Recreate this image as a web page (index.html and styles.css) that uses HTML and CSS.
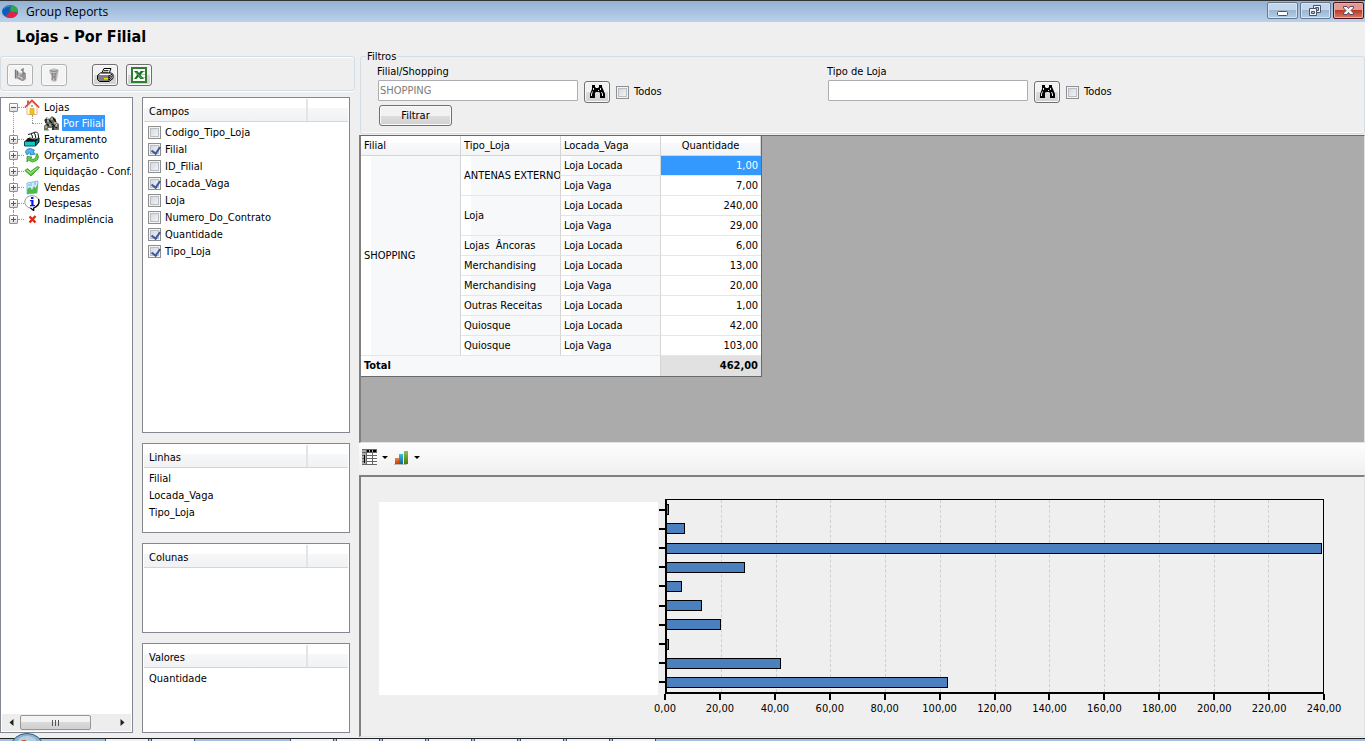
FILE: index.html
```html
<!DOCTYPE html>
<html lang="pt-BR">
<head>
<meta charset="utf-8">
<title>Group Reports</title>
<link rel="stylesheet" href="styles.css">
</head>
<body>
<header class="titlebar">
  <svg class="app-icon" width="16" height="16" viewBox="0 0 16 16"><ellipse cx="8" cy="7.500" rx="8" ry="6.500" fill="#0b5fb8"/><path d="M8 7.500 9 1A8 6 0 0 1 15.700 8.500Z" fill="#2fa84b"/><path d="M8 7.500 15.700 8.900Q14.500 13.500 9 14 6 14 3.500 12Z" fill="#e22244"/><path d="M2 4.500Q4 1.500 8 2" stroke="#5b9be0" fill="none"/></svg>
  <span class="app-name">Group Reports</span>
  <div class="window-buttons">
    <button class="win-btn" aria-label="Minimizar"><svg width="29" height="15" viewBox="0 0 29 15"><rect x="9.500" y="8.500" width="10" height="4" rx="1" fill="#fff" stroke="#4a5468"/></svg></button>
    <button class="win-btn" aria-label="Restaurar"><svg width="29" height="15" viewBox="0 0 29 15"><g fill="#f4f4f6" stroke="#4a5468"><path d="M12.500 2.500h7v7h-7z"/><path d="M14.500 4.500h3v3h-3z" fill="#a9c0d8"/><path d="M8.500 5.500h7v7h-7z"/><path d="M10.500 8.500h3v2h-3z" fill="#a9c0d8"/></g></svg></button>
    <button class="win-btn close" aria-label="Fechar"><svg width="29" height="15" viewBox="0 0 29 15"><path d="M9.500 3.500h3.500l1.500 2 1.500-2h3.500v1.500l-2.500 2.500 2.500 2.500v1.500h-3.500l-1.500-2-1.500 2h-3.500v-1.500l2.500-2.500-2.500-2.500z" fill="#f2f2f4" stroke="#5a4a5c"/></svg></button>
  </div>
</header>

<main class="workspace">
  <section class="side">
    <h1 class="page-title">Lojas - Por Filial</h1>
    <div class="toolbar">
      <button class="tool" disabled aria-label="Salvar"><svg width="16" height="16" viewBox="0 0 16 16"><path d="M3 3v8l8 3V6L7 5.500 5 3z" fill="#b9b9b9"/><path d="M3.500 2.500v9M5.500 4v4" stroke="#777" stroke-width="1.300"/><path d="M4 8.500h4L12.500 5v8.500L10 14l-5-3z" fill="#909090"/><path d="M9 3.500 11 2v4l2 .5v6" fill="none" stroke="#777" stroke-width="1.300"/><path d="M6 9.500l4 1v2" fill="none" stroke="#e2e2e2"/></svg></button>
      <button class="tool" disabled aria-label="Excluir"><svg width="16" height="16" viewBox="0 0 16 16"><path d="M3.500 3q1-1.500 4.500-1.500T12.500 3v2.500l-1 2 .5 1-1.500 5.500q-2.500 1.500-5 0L5 8.500 3.500 5.500z" fill="#bdbdbd"/><path d="M4 3.500q4 2 8 0M5 6.500l3 .5 3-1M6 7l1 2-1 4M10 7 8.500 9.500l1 4M6 10h4" stroke="#888" fill="none" stroke-width="1.200"/></svg></button>
      <button class="tool spaced" aria-label="Imprimir"><svg width="18" height="16" viewBox="0 0 18 16"><path d="M5.500 6.500 8 1.500h7l-2 5" fill="#fff" stroke="#000"/><path d="M8 3.500h4.500M7 5.200h5" stroke="#000" stroke-width=".8"/><path d="M1.500 8.500 4.500 6h11l1.500 1.500v4l-4 3h-9.500l-2-2z" fill="#fff" stroke="#000"/><path d="M2 9h11l3.500-2M2 11h11l3.500-2.500M2 13h11l3-2.500" stroke="#000" fill="none"/><path d="M13 8.500v5" stroke="#000"/><path d="M8 11.700h4" stroke="#f2e600" stroke-width="1.500"/></svg></button>
      <button class="tool" aria-label="Exportar para Excel"><svg width="16" height="16" viewBox="0 0 16 16"><path d="M1 1h14v14H1z" fill="#fff" stroke="#2c8030" stroke-width="2"/><path d="M9 4.500h5M9 7.500h5M9 10.500h5" stroke="#a6cda2"/><path d="M3 4h3.500l1.500 2 2-2h3L9.500 7.700 13 12H9.300L7.500 9.700 5.500 12H3l3-4z" fill="#176d20"/><path d="M4.500 5 11 11.500" stroke="#7fc07c"/></svg></button>
    </div>
    <div class="side-body">
      <nav class="tree-panel">
        <ul class="tree">
          <li class="branch open">
            <div class="node"><button class="expander" aria-label="Recolher Lojas"></button><svg class="node-icon" width="16" height="16" viewBox="0 0 16 16"><path d="M3 8v7.500h10V8L8 3z" fill="#fffaf0" stroke="#e3b98a"/><path d="M.8 8.500 8 1.300l7.200 7.200" fill="none" stroke="#d93a32" stroke-width="1.600"/><path d="M7 6h2v2H7z" fill="#8ab4ee"/><path d="M6 9.500h4v6H6z" fill="#f3c21c" stroke="#d59c10" stroke-width=".6"/><path d="M3 1.500h2v3l-2 2z" fill="#d45a4a"/></svg><a href="#lojas">Lojas</a></div>
            <ul class="subtree">
              <li class="node"><svg class="node-icon" width="16" height="16" viewBox="0 0 16 16"><path d="M1 5l3-3 2 2 3-3 4 3v3l3 2v6H9v-2H5v2H1v-4l2-2z" fill="#6b6e62"/><path d="M3 4v4M6 5l3 3M10 3l3 4M4 9l2 2M9 9l5 4M10 11v4" stroke="#111" stroke-width="1.300"/><path d="M4 6h2M8 4h2M11 8h2M6 10h2M2 12h2M12 11h2M4 3.500h1M13 9.500h1" stroke="#e6e6da"/><path d="M5 8h1M8 12h1" stroke="#5ca0b8"/><path d="M1 15h5" stroke="#5f8a50"/></svg><a class="selected" href="#por-filial">Por Filial</a></li>
            </ul>
          </li>
          <li class="branch"><div class="node"><button class="expander" aria-label="Expandir Faturamento"></button><svg class="node-icon" width="16" height="16" viewBox="0 0 16 16"><path d="M.5 10.500 4 7h11l-3 3.500z" fill="#111"/><path d="M4 3.500q3-1.500 4 .5l1 4.500M7 2.500q3-1.500 4 .5l1 5M9.500 1.500q4-1.500 4.500 1l.8 5" fill="#fff" stroke="#111"/><path d="M5 6.500l6 1.500 3-1" stroke="#999" fill="none"/><path d="M.5 10.500h11V15H.5z" fill="#19c4c8" stroke="#055"/><path d="M11.500 10.500 15 7v4l-3.500 4z" fill="#087478" stroke="#022"/></svg><a href="#faturamento">Faturamento</a></div></li>
          <li class="branch"><div class="node"><button class="expander" aria-label="Expandir Orçamento"></button><svg class="node-icon" width="16" height="16" viewBox="0 0 16 16"><path d="M1.500 4.500Q3 1 6.500 1.500L10.500 3 9 5l2.500 2L6 8l.5-2Q4 5 3.500 8 1.500 7 1.500 4.500z" fill="#55b4ec" stroke="#1b76bc" stroke-width=".8"/><path d="M13 6.500Q16 11 12.500 13.500l-4 1.500L4 13l-1 2V9.500l5 .5-1.500 1.500q4 2 5-1z" fill="#6bcf42" stroke="#2c9524" stroke-width=".8"/></svg><a href="#orcamento">Orçamento</a></div></li>
          <li class="branch"><div class="node"><button class="expander" aria-label="Expandir Liquidação"></button><svg class="node-icon" width="16" height="16" viewBox="0 0 16 16"><path d="M.8 7.500 3.500 5.500l3 3 7-5L15.500 4.500 7 13z" fill="#5cc23a" stroke="#2c9a26" stroke-width=".8"/><path d="M2.500 7l4 3L13.500 5" fill="none" stroke="#b5ee98"/></svg><a href="#liquidacao">Liquidação - Conf.</a></div></li>
          <li class="branch"><div class="node"><button class="expander" aria-label="Expandir Vendas"></button><svg class="node-icon" width="16" height="16" viewBox="0 0 16 16"><path d="M3 4l11-2-1 12-10 1z" fill="#d3ebfb" stroke="#8dbde0"/><path d="M3 15l.3-5L6 8l2 3 2-4 1.500 2L14 4l-1 10z" fill="#4dbb52"/><path d="M4 6h2M7 4v3M11 3v3" stroke="#6db3ea"/></svg><a href="#vendas">Vendas</a></div></li>
          <li class="branch"><div class="node"><button class="expander" aria-label="Expandir Despesas"></button><svg class="node-icon" width="16" height="16" viewBox="0 0 16 16"><path d="M8 .7a7 6.200 0 0 1 1.500 12.300V15.500L6.500 13A7 6.200 0 0 1 8 .7z" fill="#fff" stroke="#999"/><path d="M14.500 4q2 6-4.800 9v2.500L6.500 13" fill="none" stroke="#000" stroke-width="1.300"/><path d="M7 2h2.500v2H7zM6 5h3.500v5H11v1.200H6V10h1.300V6.200H6z" fill="#1010f0"/></svg><a href="#despesas">Despesas</a></div></li>
          <li class="branch"><div class="node"><button class="expander" aria-label="Expandir Inadimplência"></button><svg class="node-icon" width="16" height="16" viewBox="0 0 16 16"><path d="M5.500 5.500l6 6M11.500 5 5.500 11.500" stroke="#dd2a13" stroke-width="2.400"/></svg><a href="#inadimplencia">Inadimplência</a></div></li>
        </ul>
        <div class="scrollbar">
          <button class="scroll-arrow" aria-label="Rolar para a esquerda"><svg width="5" height="7" viewBox="0 0 5 7"><path d="M4.500 0v7L.5 3.500z" fill="#222"/></svg></button>
          <div class="scroll-thumb"><i></i><i></i><i></i></div>
          <button class="scroll-arrow last" aria-label="Rolar para a direita"><svg width="5" height="7" viewBox="0 0 5 7"><path d="M.5 0v7l4-3.500z" fill="#222"/></svg></button>
        </div>
      </nav>
      <div class="lists">
        <section class="list grow"><h2 class="list-head"><span>Campos</span></h2>
          <div class="list-body checks">
            <label class="field"><input class="check" type="checkbox">Codigo_Tipo_Loja</label>
            <label class="field"><input class="check" type="checkbox" checked>Filial</label>
            <label class="field"><input class="check" type="checkbox">ID_Filial</label>
            <label class="field"><input class="check" type="checkbox" checked>Locada_Vaga</label>
            <label class="field"><input class="check" type="checkbox">Loja</label>
            <label class="field"><input class="check" type="checkbox">Numero_Do_Contrato</label>
            <label class="field"><input class="check" type="checkbox" checked>Quantidade</label>
            <label class="field"><input class="check" type="checkbox" checked>Tipo_Loja</label>
          </div></section>
        <section class="list"><h2 class="list-head"><span>Linhas</span></h2>
          <ul class="list-body"><li class="field">Filial</li><li class="field">Locada_Vaga</li><li class="field">Tipo_Loja</li></ul></section>
        <section class="list"><h2 class="list-head"><span>Colunas</span></h2></section>
        <section class="list"><h2 class="list-head"><span>Valores</span></h2>
          <ul class="list-body"><li class="field">Quantidade</li></ul></section>
      </div>
    </div>
  </section>

  <section class="content">
    <fieldset class="filters">
      <legend>Filtros</legend>
      <div class="filter">
        <label for="filial">Filial/Shopping</label>
        <div class="filter-row">
          <input class="text" id="filial" type="text" value="SHOPPING" disabled>
          <button class="tool find" aria-label="Procurar filial"><svg width="18" height="14" viewBox="0 0 18 14"><path d="M4 0h3v2l1 1h2l1-1V0h3v2l1 2 2 5v4h-5V8l-1-1H8L7 8v5H2V9l2-5z" fill="#000"/><path d="M5.500 3v2M4.500 6.500 3.500 9v2M12.500 3v2M10.500 5v1M13.500 7l1 2v2" stroke="#fff" fill="none" stroke-width=".9"/></svg></button>
          <label class="all"><input class="check" type="checkbox">Todos</label>
        </div>
        <button class="apply">Filtrar</button>
      </div>
      <div class="filter">
        <label for="tipo">Tipo de Loja</label>
        <div class="filter-row">
          <input class="text" id="tipo" type="text">
          <button class="tool find" aria-label="Procurar tipo"><svg width="18" height="14" viewBox="0 0 18 14"><path d="M4 0h3v2l1 1h2l1-1V0h3v2l1 2 2 5v4h-5V8l-1-1H8L7 8v5H2V9l2-5z" fill="#000"/><path d="M5.500 3v2M4.500 6.500 3.500 9v2M12.500 3v2M10.500 5v1M13.500 7l1 2v2" stroke="#fff" fill="none" stroke-width=".9"/></svg></button>
          <label class="all"><input class="check" type="checkbox">Todos</label>
        </div>
      </div>
    </fieldset>

    <div class="grid-area">
      <table class="pivot">
        <thead><tr><th>Filial</th><th>Tipo_Loja</th><th>Locada_Vaga</th><th class="measure">Quantidade</th></tr></thead>
        <tbody>
          <tr><th rowspan="10">SHOPPING</th><th rowspan="2">ANTENAS EXTERNO</th><th>Loja Locada</th><td class="current">1,00</td></tr>
          <tr><th>Loja Vaga</th><td>7,00</td></tr>
          <tr><th rowspan="2">Loja</th><th>Loja Locada</th><td>240,00</td></tr>
          <tr><th>Loja Vaga</th><td>29,00</td></tr>
          <tr><th>Lojas&nbsp; Âncoras</th><th>Loja Locada</th><td>6,00</td></tr>
          <tr><th>Merchandising</th><th>Loja Locada</th><td>13,00</td></tr>
          <tr><th>Merchandising</th><th>Loja Vaga</th><td>20,00</td></tr>
          <tr><th>Outras Receitas</th><th>Loja Locada</th><td>1,00</td></tr>
          <tr><th>Quiosque</th><th>Loja Locada</th><td>42,00</td></tr>
          <tr><th>Quiosque</th><th>Loja Vaga</th><td>103,00</td></tr>
        </tbody>
        <tfoot><tr><th colspan="3">Total</th><td>462,00</td></tr></tfoot>
      </table>
    </div>

    <div class="view-bar">
      <button class="view-btn" aria-label="Tabela"><svg width="15" height="16" viewBox="0 0 15 16" shape-rendering="crispEdges"><path d="M0 0h15v16H0z" fill="#666"/><path d="M0 1h4v14H0z" fill="#aaa"/><path d="M5 1h9v2H5zM2 6h1v8H2z" fill="#000"/><path d="M7 1h1v2H7zM10 1h1v2h-1z" fill="#aaa"/><path d="M5 4h5v2H5zM11 4h4v2h-4zM5 7h5v2H5zM11 7h4v2h-4zM5 10h5v2H5zM11 10h4v2h-4zM5 13h5v2H5zM11 13h4v2h-4z" fill="#fff"/><path d="M0 3h5v1H0zM0 6h2v1H0zM0 9h2v1H0zM0 12h2v1H0z" fill="#666"/></svg><span class="caret"></span></button>
      <button class="view-btn" aria-label="Gráfico"><svg width="15" height="15" viewBox="0 0 15 15"><defs><linearGradient id="o" x2="0" y2="1"><stop stop-color="#f08a35"/><stop offset="1" stop-color="#c83a10"/></linearGradient><linearGradient id="b" x2="0" y2="1"><stop stop-color="#36bfe0"/><stop offset="1" stop-color="#0b6c90"/></linearGradient><linearGradient id="g" x2="0" y2="1"><stop stop-color="#8fbf50"/><stop offset="1" stop-color="#4a7a10"/></linearGradient></defs><path d="M0 14.500h13" stroke="#bbb"/><path d="M1 8h4v6H1z" fill="url(#o)"/><path d="M5 4h4v10H5z" fill="url(#b)"/><path d="M10 1h4v13h-4z" fill="url(#g)"/></svg><span class="caret"></span></button>
    </div>

    <div class="chart">
      <div class="labels"></div>
      <div class="plot-side">
        <div class="plot">
          <div class="gridlines"><i></i><i></i><i></i><i></i><i></i><i></i><i></i><i></i><i></i><i></i><i></i><i></i></div>
          <div class="bar-row"><b style="width:0.417%"></b></div>
          <div class="bar-row"><b style="width:2.917%"></b></div>
          <div class="bar-row"><b style="width:100%"></b></div>
          <div class="bar-row"><b style="width:12.083%"></b></div>
          <div class="bar-row"><b style="width:2.5%"></b></div>
          <div class="bar-row"><b style="width:5.417%"></b></div>
          <div class="bar-row"><b style="width:8.333%"></b></div>
          <div class="bar-row"><b style="width:0.417%"></b></div>
          <div class="bar-row"><b style="width:17.5%"></b></div>
          <div class="bar-row"><b style="width:42.917%"></b></div>
        </div>
        <div class="axis"><span>0,00</span><span>20,00</span><span>40,00</span><span>60,00</span><span>80,00</span><span>100,00</span><span>120,00</span><span>140,00</span><span>160,00</span><span>180,00</span><span>200,00</span><span>220,00</span><span>240,00</span></div>
      </div>
    </div>
  </section>
</main>

<footer class="taskbar">
  <svg class="orb" width="34" height="8" viewBox="0 0 34 8"><ellipse cx="17" cy="14" rx="16" ry="13.500" fill="#8fb4d2" stroke="#2c5878"/><ellipse cx="17" cy="11" rx="10" ry="8" fill="#b8d0e2"/><path d="M11 8q2-2 5-1v1z" fill="#d0603c"/></svg>
  <div class="tasks near"><i></i><i></i></div>
  <div class="tasks"><i></i><i></i><i></i><i></i><i></i><i></i><i></i><i></i></div>
</footer>
</body>
</html>
```
FILE: styles.css
```css
* { box-sizing: border-box; }
html, body { height: 100%; }
body {
  margin: 0;
  display: flex;
  flex-direction: column;
  overflow: hidden;
  background: #efefef;
  color: #000;
  font: 11px/16px "DejaVu Sans Condensed", "DejaVu Sans", sans-serif;
}
button, input { font: inherit; color: inherit; }
button { padding: 0; }
ul { list-style: none; margin: 0; padding: 0; }
a { color: inherit; text-decoration: none; }
svg { display: block; flex: none; }

/* Title bar */
.titlebar {
  flex: none;
  display: flex;
  align-items: center;
  height: 22px;
  padding: 0 1px 0 2px;
  border-top: 1px solid #333;
  background: linear-gradient(#94b1d2, #bad1ea);
}
.app-name { flex: 1; margin-left: 8px; font: 12px/16px "Open Sans", "Noto Sans", sans-serif; }
.window-buttons { display: flex; gap: 2px; height: 17px; margin-bottom: 2px; }
.win-btn {
  width: 31px;
  border: 1px solid #66788f;
  border-radius: 2px;
  box-shadow: inset 0 0 0 1px #d5e3f2;
  background: linear-gradient(#c3d6ea 50%, #9bb7d3 50%, #b4cde6);
}
.win-btn.close {
  border-color: #50101c;
  box-shadow: inset 0 0 0 1px #e9aca6;
  background: linear-gradient(#e09a90 50%, #b93b27 50%, #d37d68);
}

/* Workspace */
.workspace { flex: 1; min-height: 0; display: flex; gap: 4px; }
.side { flex: none; width: 355px; display: flex; flex-direction: column; padding-bottom: 5px; }
.page-title { margin: 0; padding: 5px 16px 9px; font-size: 16px; line-height: 20px; font-weight: bold; }
.toolbar {
  display: flex;
  gap: 8px;
  padding: 7px 6px 4px;
  border: 1px solid #d3dde6;
  border-radius: 3px;
  box-shadow: inset 0 1px #fff, 0 1px #fff;
}
.tool {
  display: flex;
  align-items: center;
  justify-content: center;
  width: 26px;
  height: 22px;
  border: 1px solid #707070;
  border-radius: 3px;
  box-shadow: inset 0 0 0 1px #fafafa;
  background: linear-gradient(#f2f2f2 50%, #dcdcdc 50%, #d0d0d0);
}
.tool:disabled { border-color: #adb2b5; background: #f4f4f4; }
.tool.spaced { margin-left: 17px; }
.side-body { flex: 1; min-height: 0; display: flex; gap: 9px; padding: 6px 5px 0 0; }
.tree-panel {
  flex: none;
  display: flex;
  flex-direction: column;
  width: 133px;
  padding: 1px;
  border: 1px solid #828790;
  background: #fff;
}
.tree { flex: 1; overflow: hidden; }
.branch { position: relative; }
.branch::before {
  content: "";
  position: absolute;
  left: 11px;
  top: 0;
  bottom: 0;
  border-left: 1px dotted #999;
}
.branch:first-child::before { top: 8px; }
.branch:last-child::before { bottom: 8px; }
.node { position: relative; display: flex; align-items: center; height: 16px; padding-left: 7px; }
.node .node-icon { margin: 0 3px 0 6px; position: relative; }
.node::before {
  content: "";
  position: absolute;
  left: 16px;
  top: 8px;
  width: 6px;
  border-top: 1px dotted #999;
}
.node a { white-space: nowrap; padding: 1px 1px 0; line-height: 15px; }
.subtree .node { padding-left: 35px; }
.subtree .node::before { left: 30px; width: 10px; }
.subtree::before {
  content: "";
  position: absolute;
  left: 30px;
  top: 16px;
  height: 8px;
  border-left: 1px dotted #999;
}
.node a.selected { background: #3399ff; color: #fff; }
.expander {
  position: relative;
  flex: none;
  width: 9px;
  height: 9px;
  border: 1px solid #919191;
  border-radius: 1px;
  background:
    linear-gradient(#3b5ba5, #3b5ba5) center / 5px 1px no-repeat,
    linear-gradient(#3b5ba5, #3b5ba5) center / 1px 5px no-repeat,
    linear-gradient(#fff, #ddd);
}
.open > .node .expander {
  background: linear-gradient(#3b5ba5, #3b5ba5) center / 5px 1px no-repeat, linear-gradient(#fff, #ddd);
}
.scrollbar { display: flex; height: 17px; background: #ededed; }
.scroll-arrow { display: flex; align-items: center; justify-content: center; width: 18px; border: 0; background: none; }
.scroll-arrow.last { margin-left: auto; }
.scroll-thumb {
  display: flex;
  align-items: center;
  justify-content: center;
  gap: 2px;
  width: 71px;
  height: 15px;
  margin-top: 1px;
  border: 1px solid #979797;
  border-radius: 2px;
  background: linear-gradient(#f3f3f3 50%, #dadada 50%, #cfcfcf);
}
.scroll-thumb i { width: 1px; height: 6px; background: #555; }

/* Field lists */
.lists { flex: 1; display: flex; flex-direction: column; gap: 10px; }
.list { flex: none; height: 90px; padding: 1px; border: 1px solid #828790; background: #fff; }
.list.grow { flex: 1; height: auto; }
.list-head {
  display: flex;
  margin: 0;
  padding-right: 40px;
  border-bottom: 1px solid #d5d5d5;
  background: linear-gradient(#fff 40%, #f6f7f8 40%, #f1f2f4);
  font: inherit;
}
.list-head span { flex: 1; padding: 5px 5px 1px; border-right: 2px solid #e3e4e6; }
.list-body { padding: 2px 5px 0; }
.list-body.checks { padding-left: 4px; }
.field { display: flex; align-items: center; gap: 4px; height: 17px; }
.check {
  appearance: none;
  flex: none;
  position: relative;
  width: 13px;
  height: 13px;
  margin: 0;
  border: 1px solid #8e8f8f;
  box-shadow: inset 0 0 0 1px #f4f4f4, inset 0 0 0 2px #b9bec5;
  background: linear-gradient(135deg, #cdd1d8, #fafafa);
}
.checks .check { margin-bottom: 1px; }
.check:checked::after {
  content: "";
  position: absolute;
  left: 4px;
  top: 1px;
  width: 4px;
  height: 7px;
  border: solid #4159a0;
  border-width: 0 2px 2px 0;
  transform: rotate(35deg);
}

/* Filters */
.content { flex: 1; min-width: 0; display: flex; flex-direction: column; padding-top: 27px; }
.filters {
  flex: none;
  display: flex;
  height: 85px;
  margin: 0 0 0 1px;
  padding: 0 0 0 16px;
  border: 1px solid #d3dde6;
  border-radius: 3px;
  box-shadow: inset 0 -1px #fff;
}
.filters legend { margin-left: -11px; padding: 0 1px; line-height: 15px; }
.filter { width: 450px; }
.filter > label { display: block; }
.filter-row { display: flex; align-items: center; gap: 6px; height: 24px; padding-left: 1px; }
.text { align-self: flex-start; width: 200px; height: 21px; padding: 0 1px; border: 1px solid #abadb3; border-radius: 1px; background: #fff; }
.text:disabled { color: #7b7b7b; }
.all { display: flex; align-items: center; gap: 5px; }
.apply {
  display: block;
  width: 73px;
  height: 21px;
  margin: 1px 0 0 2px;
  border: 1px solid #707070;
  border-radius: 3px;
  box-shadow: inset 0 0 0 1px #fafafa;
  background: linear-gradient(#f2f2f2 50%, #dedede 50%, #d0d0d0);
}

/* Pivot grid */
.grid-area {
  flex: 1;
  margin-top: 1px;
  border: solid;
  border-width: 1px 1px 1px 2px;
  border-color: #696969 #e3e3e3 #e3e3e3 #808080;
  background: #ababab;
}
.pivot {
  table-layout: fixed;
  width: 401px;
  border-collapse: separate;
  border-spacing: 0;
  border: solid #696969;
  border-width: 0 1px 1px 0;
  background: #fff;
}
.pivot th, .pivot td {
  height: 20px;
  padding: 0 3px;
  overflow: hidden;
  border-right: 1px solid #d5d5d5;
  border-bottom: 1px solid #e6e6e6;
  line-height: 16px;
  white-space: nowrap;
}
.pivot th { background: linear-gradient(90deg, #fff 10px, #f7f8fa 10px); text-align: left; font-weight: normal; }
.pivot thead th { background: linear-gradient(#fff 35%, #f8f9fa 35%, #f3f4f6); border-bottom-color: #d5d5d5; }
.pivot thead .measure { text-align: center; }
.pivot td { text-align: right; border-right: 0; }
.pivot td.current { background: #3399ff; color: #fff; }
.pivot tfoot th, .pivot tfoot td { font-weight: bold; border-bottom: 0; }
.pivot tfoot td { background: #e1e1e1; }

/* View toolbar */
.view-bar { flex: none; display: flex; align-items: center; height: 32px; gap: 6px; padding: 0 3px 4px; background: linear-gradient(#fdfdfd, #f0f0f0); }
.view-btn { display: flex; align-items: center; gap: 5px; border: 0; background: none; }
.caret { border: 3px solid transparent; border-top-color: #000; border-bottom: 0; }

/* Chart */
.chart {
  flex: none;
  display: flex;
  height: 262px;
  margin-bottom: 1px;
  padding: 22px 40px 19px 18px;
  border: solid;
  border-width: 2px 1px 1px 2px;
  border-color: #808080 #e3e3e3 #e3e3e3 #808080;
}
.labels { flex: none; width: 279px; margin: 3px 0 22px; background: #fff; }
.plot-side { flex: 1; display: flex; flex-direction: column; margin-left: 7px; }
.plot { position: relative; flex: 1; display: flex; flex-direction: column; border: 1px solid #000; border-width: 1px 1px 2px 2px; }
.gridlines { position: absolute; inset: 0; display: flex; }
.gridlines i { flex: 1; border-right: 1px dashed #cfcfcf; }
.gridlines i:last-child { border: 0; }
.bar-row { position: relative; flex: 1; display: flex; align-items: center; }
.bar-row::before { content: ""; position: absolute; left: -8px; width: 7px; height: 2px; background: #000; }
.bar-row b { height: 11px; min-width: 3px; margin-left: -1px; border: 1px solid #000; background: #4a80bd; }
.axis { display: flex; margin: 0 calc(-100% / 24); }
.axis span { flex: 1; text-align: center; }
.axis span::before { content: ""; display: block; width: 2px; height: 6px; margin: 0 auto 1px; background: #000; }

/* Taskbar */
.taskbar { position: relative; flex: none; display: flex; height: 3px; padding-left: 105px; border-top: 1px solid #222; background: #a3c0e2; }
.orb { position: absolute; left: 10px; bottom: 0; }
.tasks { display: flex; gap: 2px; }
.tasks i { width: 44px; border: solid #45546a; border-width: 0 1px; background: #eef3fb; }
.tasks.near { margin-right: 95px; }
```
